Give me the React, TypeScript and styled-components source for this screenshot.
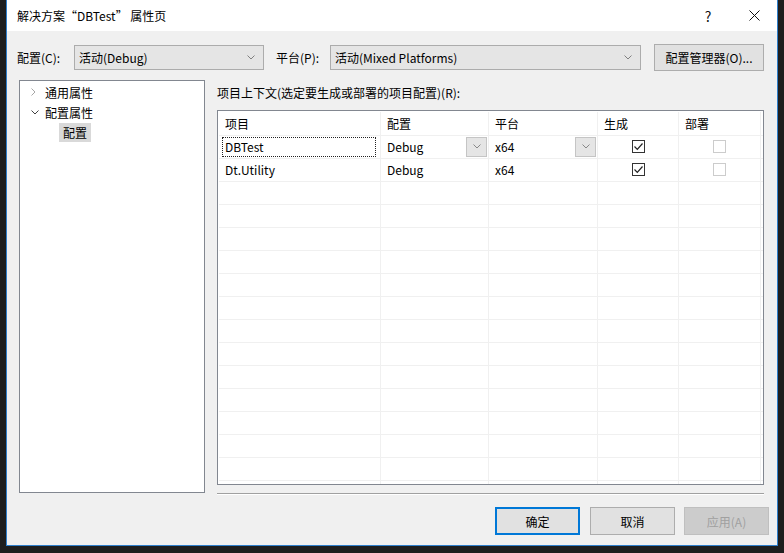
import { memo } from 'react'
import styled, { createGlobalStyle } from 'styled-components'

const GlobalStyle = createGlobalStyle`
  html, body {
    margin: 0;
    padding: 0;
    background: #1e1e1e;
  }
  * {
    box-sizing: border-box;
  }
`

const FONT = `'Segoe UI', 'Noto Sans CJK SC', 'Noto Sans', sans-serif`

const Screen = styled.div`
  display: flex;
  width: 784px;
  height: 553px;
  padding-left: 6px;
  background: #1e1e1e;
  font-family: ${FONT};
  font-size: 12px;
  color: #000;
`

const Window = styled.div`
  display: flex;
  flex-direction: column;
  width: 772px;
  height: 546px;
  border: 1px solid #2f7fcb;
  border-top: none;
  background: #f0f0f0;
`

const TitleBar = styled.div`
  display: flex;
  align-items: center;
  height: 31px;
  padding-left: 10px;
  background: #fff;
`

const Title = styled.div`
  flex: 1;
`

const TitleButton = styled.div`
  display: flex;
  align-items: center;
  justify-content: center;
  width: 46px;
  height: 31px;
  font-size: 14px;
  color: #111;
`

const Body = styled.div`
  display: flex;
  flex-direction: column;
  padding: 13px 12px 0 10px;
`

const TopRow = styled.div`
  display: flex;
  align-items: center;
  height: 27px;
`

const FieldLabel = styled.div<{ $w: number; $gap?: number }>`
  width: ${({ $w }) => $w}px;
  margin-left: ${({ $gap }) => $gap ?? 0}px;
  flex-shrink: 0;
`

const Combo = styled.div<{ $w: number }>`
  display: flex;
  align-items: center;
  width: ${({ $w }) => $w}px;
  height: 25px;
  padding: 0 8px 0 4px;
  background: #e5e5e5;
  border: 1px solid #acacac;
  flex-shrink: 0;
`

const ComboText = styled.div`
  flex: 1;
`

const Button = styled.div<{ $variant?: 'default' | 'disabled' }>`
  display: flex;
  align-items: center;
  justify-content: center;
  width: 85px;
  height: 28px;
  background: ${({ $variant }) => ($variant === 'disabled' ? '#cccccc' : '#e1e1e1')};
  border: ${({ $variant }) =>
    $variant === 'default' ? '2px solid #0078d7' : $variant === 'disabled' ? '1px solid #bfbfbf' : '1px solid #adadad'};
  color: ${({ $variant }) => ($variant === 'disabled' ? '#a0a0a0' : '#000')};
`

const ManagerButton = styled(Button)`
  width: 110px;
  height: 27px;
  margin-left: 13px;
`

const Main = styled.div`
  display: flex;
  margin-top: 9px;
  height: 415px;
`

const TreePanel = styled.div`
  width: 186px;
  height: 413px;
  margin-left: 2px;
  padding-top: 1px;
  background: #fff;
  border: 1px solid #828790;
`

const TreeItem = styled.div<{ $indent: number }>`
  display: flex;
  align-items: center;
  height: 20px;
  padding-left: ${({ $indent }) => $indent}px;
`

const Chevron = styled.div`
  display: flex;
  align-items: center;
  width: 14px;
  flex-shrink: 0;
`

const TreeText = styled.div<{ $selected?: boolean }>`
  padding: ${({ $selected }) => ($selected ? '1px 4px' : '0')};
  margin-left: ${({ $selected }) => ($selected ? '-4px' : '0')};
  background: ${({ $selected }) => ($selected ? '#d9d9d9' : 'transparent')};
`

const RightPane = styled.div`
  display: flex;
  flex-direction: column;
  width: 547px;
  margin-left: 12px;
`

const GridLabel = styled.div`
  height: 30px;
  padding-top: 4px;
`

const Grid = styled.div`
  display: grid;
  grid-template-columns: 162px 108px 109px 81px 82px 1fr;
  grid-auto-rows: 23px;
  grid-template-rows: 24px;
  align-content: start;
  width: 547px;
  height: 376px;
  padding: 1px;
  background: #fff;
  border: 1px solid #828790;
  overflow: hidden;
`

const Cell = styled.div<{ $center?: boolean; $last?: boolean }>`
  display: flex;
  align-items: center;
  justify-content: ${({ $center }) => ($center ? 'center' : 'flex-start')};
  padding-left: ${({ $center }) => ($center ? '0' : '6px')};
  border-right: ${({ $last }) => ($last ? 'none' : '1px solid #f0f0f0')};
  border-bottom: 1px solid #f0f0f0;
`

const FocusText = styled.div`
  display: flex;
  align-items: center;
  height: 20px;
  margin-left: -3px;
  padding-left: 2px;
  width: calc(100% - 1px);
  border: 1px dotted #222;
`

const CellText = styled.div`
  flex: 1;
`

const DropButton = styled.div`
  display: flex;
  align-items: center;
  justify-content: center;
  width: 21px;
  height: 20px;
  margin-right: 1px;
  background: #e5e5e5;
  border: 1px solid #c5c5c5;
`

const CheckBox = styled.div<{ $disabled?: boolean }>`
  display: flex;
  align-items: center;
  justify-content: center;
  width: 13px;
  height: 13px;
  background: #fff;
  border: 1px solid ${({ $disabled }) => ($disabled ? '#cccccc' : '#333')};
`

const Separator = styled.div`
  height: 1px;
  margin-top: 8px;
  background: #a0a0a0;
  border-bottom: 1px solid #fff;
  box-sizing: content-box;
`

const Footer = styled.div`
  display: flex;
  justify-content: flex-end;
  padding: 12px 8px 0 0;
`

const FooterButton = styled(Button)<{ $gap: number }>`
  margin-left: ${({ $gap }) => $gap}px;
`

const ChevronDown = ({ color = '#606060' }: { color?: string }) => (
  <svg width='8' height='5' viewBox='0 0 8 5'>
    <path d='M0.5 0.5 L4 4 L7.5 0.5' fill='none' stroke={color} strokeWidth='1' />
  </svg>
)

const ChevronRight = () => (
  <svg width='5' height='8' viewBox='0 0 5 8'>
    <path d='M0.5 0.5 L4 4 L0.5 7.5' fill='none' stroke='#a6a6a6' strokeWidth='1' />
  </svg>
)

const CheckMark = () => (
  <svg width='11' height='11' viewBox='0 0 11 11'>
    <path d='M1.5 5.5 L4.3 8.3 L9.5 2.5' fill='none' stroke='#222' strokeWidth='1.2' />
  </svg>
)

const CloseIcon = () => (
  <svg width='11' height='11' viewBox='0 0 11 11'>
    <path d='M0.5 0.5 L10.5 10.5 M10.5 0.5 L0.5 10.5' stroke='#111' strokeWidth='1' />
  </svg>
)

const projects = [
  { name: 'DBTest', config: 'Debug', platform: 'x64', focused: true },
  { name: 'Dt.Utility', config: 'Debug', platform: 'x64', focused: false },
]

const headers = ['项目', '配置', '平台', '生成', '部署', '']
const EMPTY_ROWS = 14

const App = memo(() => {
  return (
    <Screen>
      <GlobalStyle />
      <Window>
        <TitleBar>
          <Title>解决方案“DBTest” 属性页</Title>
          <TitleButton>?</TitleButton>
          <TitleButton>
            <CloseIcon />
          </TitleButton>
        </TitleBar>

        <Body>
          {/* 配置 / 平台 选择栏 */}
          <TopRow>
            <FieldLabel $w={57}>配置(C):</FieldLabel>
            <Combo $w={190}>
              <ComboText>活动(Debug)</ComboText>
              <ChevronDown color='#808080' />
            </Combo>
            <FieldLabel $w={54} $gap={12}>
              平台(P):
            </FieldLabel>
            <Combo $w={311}>
              <ComboText>活动(Mixed Platforms)</ComboText>
              <ChevronDown color='#808080' />
            </Combo>
            <ManagerButton>配置管理器(O)...</ManagerButton>
          </TopRow>

          <Main>
            {/* 左侧树 */}
            <TreePanel>
              <TreeItem $indent={11}>
                <Chevron>
                  <ChevronRight />
                </Chevron>
                <TreeText>通用属性</TreeText>
              </TreeItem>
              <TreeItem $indent={11}>
                <Chevron>
                  <ChevronDown color='#404040' />
                </Chevron>
                <TreeText>配置属性</TreeText>
              </TreeItem>
              <TreeItem $indent={29}>
                <Chevron />
                <TreeText $selected>配置</TreeText>
              </TreeItem>
            </TreePanel>

            {/* 项目配置表格 */}
            <RightPane>
              <GridLabel>项目上下文(选定要生成或部署的项目配置)(R):</GridLabel>
              <Grid>
                {headers.map((h, i) => (
                  <Cell key={'h' + i} $last={i === headers.length - 1}>
                    {h}
                  </Cell>
                ))}
                {projects.map((p) => [
                  <Cell key={p.name + 'n'}>
                    {p.focused ? <FocusText>{p.name}</FocusText> : p.name}
                  </Cell>,
                  <Cell key={p.name + 'c'}>
                    <CellText>{p.config}</CellText>
                    {p.focused && (
                      <DropButton>
                        <ChevronDown color='#888' />
                      </DropButton>
                    )}
                  </Cell>,
                  <Cell key={p.name + 'p'}>
                    <CellText>{p.platform}</CellText>
                    {p.focused && (
                      <DropButton>
                        <ChevronDown color='#888' />
                      </DropButton>
                    )}
                  </Cell>,
                  <Cell key={p.name + 'b'} $center>
                    <CheckBox>
                      <CheckMark />
                    </CheckBox>
                  </Cell>,
                  <Cell key={p.name + 'd'} $center>
                    <CheckBox $disabled />
                  </Cell>,
                  <Cell key={p.name + 'e'} $last />,
                ])}
                {Array.from({ length: EMPTY_ROWS }).map((_, r) =>
                  headers.map((_h, i) => <Cell key={`e${r}-${i}`} $last={i === headers.length - 1} />)
                )}
              </Grid>
              <Separator />
            </RightPane>
          </Main>
        </Body>

        <Footer>
          <FooterButton $variant='default' $gap={0}>确定</FooterButton>
          <FooterButton $gap={10}>取消</FooterButton>
          <FooterButton $variant='disabled' $gap={9}>应用(A)</FooterButton>
        </Footer>
      </Window>
    </Screen>
  )
})

App.displayName = 'App'

export default App
